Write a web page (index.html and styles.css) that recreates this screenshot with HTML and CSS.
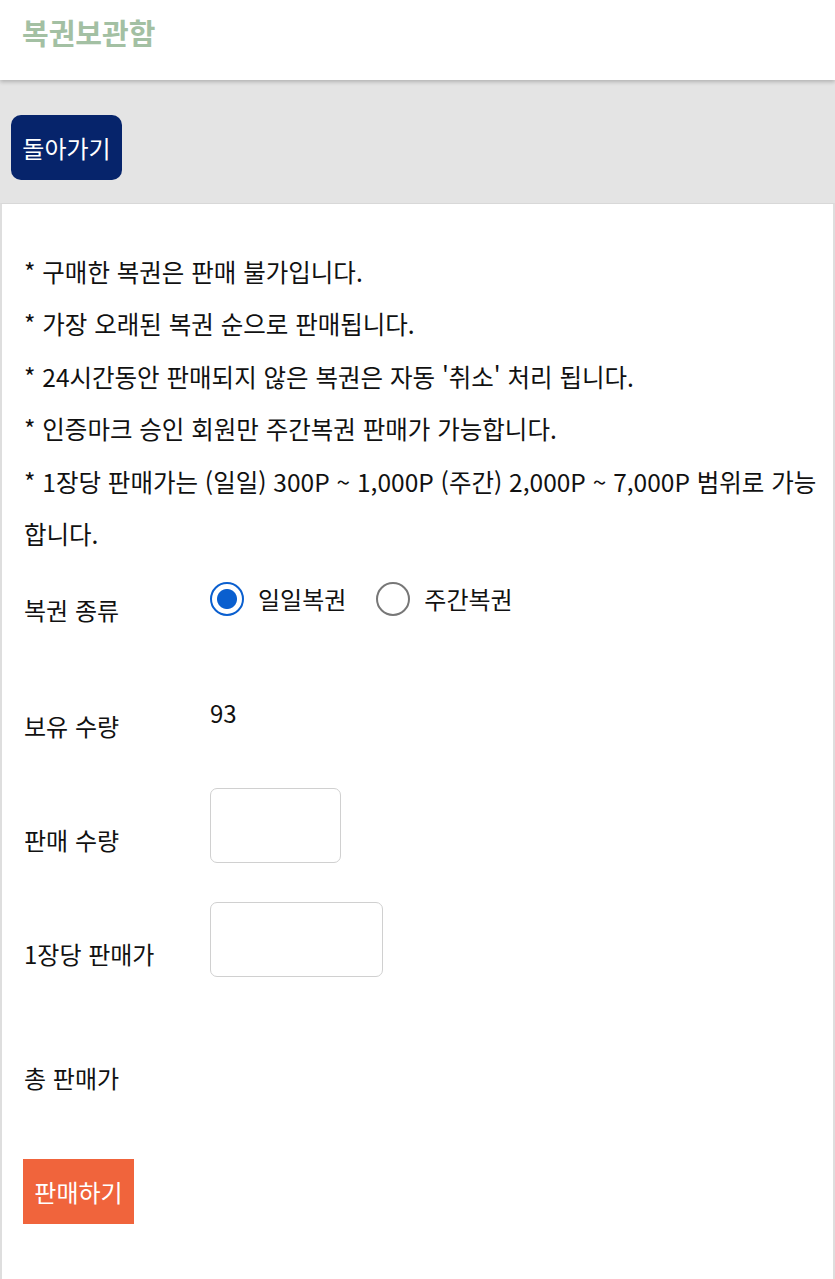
FILE: index.html
```html
<!DOCTYPE html>
<html lang="ko">
<head>
    <meta charset="UTF-8">
    <meta name="viewport" content="width=device-width, initial-scale=1.0">
    <title>복권보관함</title>
    <link rel="stylesheet" href="styles.css">
</head>
<body>
    <header class="top-bar">
        <h1>복권보관함</h1>
    </header>

    <div class="back-area">
        <button type="button" class="back-btn">돌아가기</button>
    </div>

    <div class="sell-panel">
        <div class="notice">
            <p>* 구매한 복권은 판매 불가입니다.</p>
            <p>* 가장 오래된 복권 순으로 판매됩니다.</p>
            <p>* 24시간동안 판매되지 않은 복권은 자동 '취소' 처리 됩니다.</p>
            <p>* 인증마크 승인 회원만 주간복권 판매가 가능합니다.</p>
            <p>* 1장당 판매가는 (일일) 300P ~ 1,000P (주간) 2,000P ~ 7,000P 범위로 가능합니다.</p>
        </div>

        <form class="sell-form">
            <div class="row row-type">
                <label class="row-label">복권 종류</label>
                <div class="row-value radios">
                    <label class="radio"><input type="radio" name="kind" value="daily" checked> 일일복권</label>
                    <label class="radio"><input type="radio" name="kind" value="weekly"> 주간복권</label>
                </div>
            </div>
            <div class="row row-owned">
                <label class="row-label">보유 수량</label>
                <div class="row-value">93</div>
            </div>
            <div class="row">
                <label class="row-label" for="qty">판매 수량</label>
                <input type="text" id="qty" class="box box-small">
            </div>
            <div class="row">
                <label class="row-label" for="price">1장당 판매가</label>
                <input type="text" id="price" class="box box-wide">
            </div>
            <div class="row row-total">
                <label class="row-label">총 판매가</label>
                <div class="row-value"></div>
            </div>
            <button type="submit" class="sell-btn">판매하기</button>
        </form>
    </div>
</body>
</html>
```

FILE: styles.css
```css
html, body {
    margin: 0;
    padding: 0;
}
body {
    font-family: "Noto Sans CJK KR", "Noto Sans", sans-serif;
    background-color: #e4e4e4;
    color: #111;
    width: 835px;
}
.top-bar {
    background: white;
    height: 80px;
    box-shadow: 0 2px 4px rgba(0, 0, 0, 0.22);
    position: relative;
}
.top-bar h1 {
    margin: 0;
    padding: 11px 22px 0;
    font-size: 29px;
    font-weight: bold;
    line-height: 42px;
    color: #a3c0a3;
}
.back-area {
    padding: 35px 11px 23px;
}
.back-btn {
    background-color: #06246b;
    color: white;
    border: none;
    border-radius: 10px;
    width: 111px;
    height: 65px;
    font-family: inherit;
    font-size: 24px;
    padding: 0;
    cursor: pointer;
}
.sell-panel {
    background: white;
    border-top: 1px solid #d8d8d8;
    border-left: 2px solid #dedede;
    border-right: 2px solid #dedede;
    padding: 42px 8px 60px 22px;
    min-height: 1077px;
    box-sizing: border-box;
}
.notice p {
    margin: 0;
    font-size: 24.5px;
    line-height: 52.4px;
}
.row {
    display: flex;
    align-items: flex-start;
    height: 114px;
}
.row-label {
    width: 186px;
    flex-shrink: 0;
    font-size: 24px;
    line-height: 30px;
    padding-top: 37px;
}
.row-value {
    font-size: 24px;
    line-height: 30px;
}
.row-type .row-label {
    padding-top: 35px;
}
.row-type .row-value {
    padding-top: 22px;
}
.row-owned .row-value {
    padding-top: 24px;
}
.radios {
    display: flex;
    gap: 30px;
}
.radio {
    display: flex;
    align-items: center;
    gap: 14px;
}
.radio input {
    appearance: none;
    -webkit-appearance: none;
    margin: 0;
    width: 34px;
    height: 34px;
    border: 2px solid #777;
    border-radius: 50%;
    box-sizing: border-box;
    background: white;
}
.radio input:checked {
    border: 2.5px solid #0a5fcf;
    background: radial-gradient(circle, #0a5fcf 0, #0a5fcf 9.5px, white 10.5px);
}
.box {
    height: 75px;
    border: 1.5px solid #d0d0d0;
    border-radius: 7px;
    box-sizing: border-box;
    margin: 0;
}
.box-small {
    width: 131px;
}
.box-wide {
    width: 173px;
}
.row-total {
    padding-top: 10px;
    height: 109px;
}
.sell-btn {
    display: block;
    background-color: #f0643c;
    color: white;
    border: none;
    border-radius: 0;
    width: 111px;
    height: 65px;
    margin-top: 24px;
    margin-left: -1px;
    font-family: inherit;
    font-size: 24px;
    padding: 0;
    cursor: pointer;
}
```
